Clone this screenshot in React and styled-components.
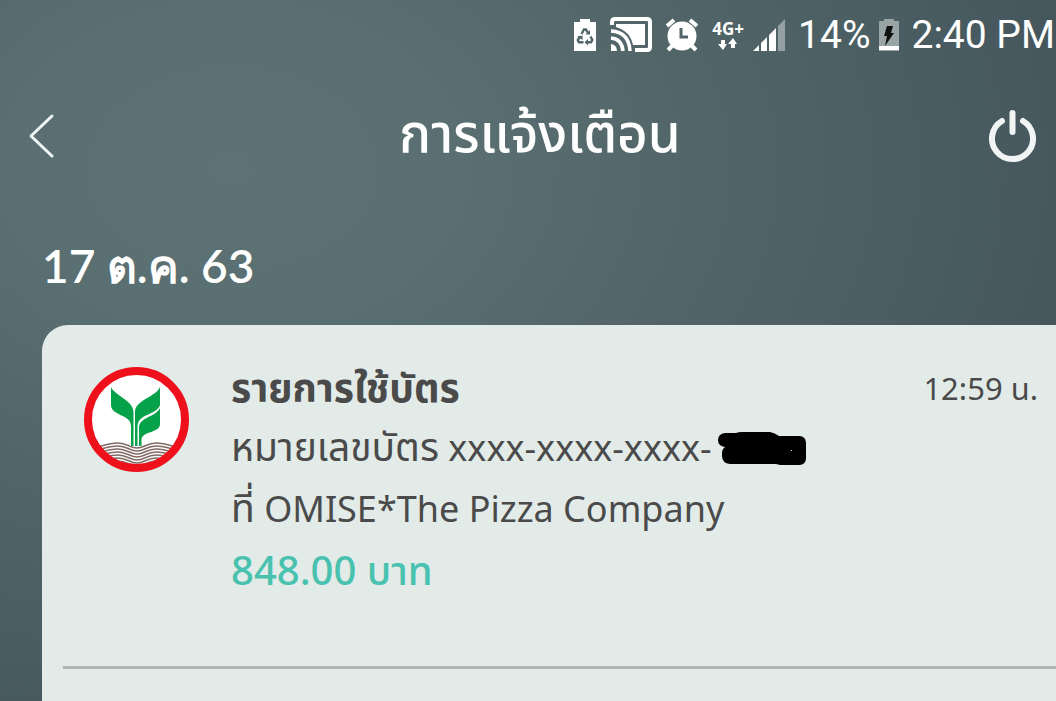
import React from "react";
import styled, { createGlobalStyle } from "styled-components";

const Global = createGlobalStyle`
  *, *::before, *::after { box-sizing: border-box; }
  body { margin: 0; background: #52666a; }
`;

const Screen = styled.div`
  min-height: 100vh;
  display: flex;
  flex-direction: column;
  overflow: hidden;
  font-family: "Noto Sans", "Noto Sans Thai", sans-serif;
  color: #fff;
  background: radial-gradient(ellipse 900px 640px at 22% 24%, #5d7274 0%, #5a6f71 25%, #43555b 100%);
`;

const StatusBar = styled.div`
  height: 70px;
  padding-right: 1px;
  display: flex;
  align-items: center;
  justify-content: flex-end;
  font-family: Roboto, sans-serif;
  font-size: 39px;
  line-height: 48px;
  white-space: nowrap;
`;

const StatusIcons = styled.div`
  display: flex;
  align-items: center;
  gap: 14px;
  margin-right: 13px;
`;

const Network = styled.div`
  display: flex;
  flex-direction: column;
  align-items: center;
  margin-right: -5px;
  font: 700 17px/18px "Open Sans", sans-serif;
`;

const BatteryLevel = styled.svg`
  margin: 0 12px 0 9px;
`;

const Header = styled.header`
  height: 132px;
  padding: 0 20px 0 28px;
  display: grid;
  grid-template-columns: 64px 1fr 48px;
  align-items: center;
`;

const IconButton = styled.button`
  display: flex;
  padding: 0;
  border: 0;
  background: none;
  color: #f1f5f6;
`;

const Title = styled.h1`
  margin: 0;
  padding-bottom: 8px;
  text-align: center;
  font-size: 53px;
  line-height: 80px;
  font-weight: 500;
`;

const DateHeading = styled.h2`
  margin: 32px 0 27px 42px;
  font-family: Lato, "Noto Sans", sans-serif;
  font-size: 46px;
  line-height: 64px;
  font-weight: 600;
`;

const Card = styled.main`
  flex: 1;
  margin-left: 42px;
  border-radius: 26px 0 0 0;
  background: #e2ebe8;
  color: #4a4a4a;
`;

const Notice = styled.article`
  display: grid;
  grid-template-columns: 105px 1fr auto;
  column-gap: 42px;
  height: 344px;
  margin-left: 21px;
  padding: 31px 18px 0 21px;
  border-bottom: 3px solid #b1b3b3;
`;

const Logo = styled.svg`
  margin-top: 11px;
`;

const Details = styled.div`
  font-size: 36px;
  line-height: 61px;
  white-space: nowrap;
`;

const Subject = styled.h3`
  margin: 0;
  font-size: 39px;
  line-height: 61px;
  font-weight: 700;
`;

const Line = styled.p`
  margin: 0;
`;

const Label = styled.span`
  font-size: 39px;
  line-height: 1;
`;

const Redaction = styled.svg`
  margin-left: 6px;
  vertical-align: -4px;
`;

const Amount = styled(Line)`
  font-size: 40px;
  color: #48c1ae;
  font-weight: 500;
`;

const Time = styled.time`
  font-size: 31px;
  line-height: 64px;
`;

function StatusGlyphs() {
  return (
    <StatusIcons>
      <svg width="22" height="34" viewBox="0 0 22 34" aria-hidden="true">
        <path d="M0 4H6V1H16V4H22V33H0Z" fill="#fff" />
        <g fill="none" stroke="#52666a" strokeWidth="2.4">
          <path d="M7.5 16L10 11.5H12L14 15M16.5 18.5L18.3 22L17 24.3H13M9.5 24.3H5L3.8 22L6 18.5" />
        </g>
        <path d="M11.5 16.5H16V12ZM14 21V27.500L10.500 24.300ZM3 18.500L8.500 17.500L8.500 22Z" fill="#52666a" />
      </svg>
      <svg width="42" height="36" viewBox="0 0 42 36" fill="none" aria-hidden="true">
        <path d="M2 8V5Q2 2 5 2H37Q40 2 40 5V30Q40 33 37 33H25" stroke="#fff" strokeWidth="4" />
        <path d="M6 7H35V28H23Q20 14 6 10Z" fill="#fff" />
        <path d="M1 14Q19 15 20 34M1 21Q12 22 13 34" stroke="#fff" strokeWidth="3.5" />
        <path d="M1 27Q7 28 7 34H1Z" fill="#fff" />
      </svg>
      <svg width="32" height="34" viewBox="0 0 32 34" fill="none" stroke="#fff" aria-hidden="true">
        <circle cx="16" cy="18" r="14.500" fill="#fff" stroke="none" />
        <path d="M1 8L8 2M24 2L31 8M6 28L2 32M26 28L30 32" strokeWidth="4" />
        <path d="M15 10V19H22" stroke="#52666a" strokeWidth="3" />
      </svg>
      <Network>
        4G+
        <svg width="20" height="12" viewBox="0 0 20 12" fill="#fff" aria-hidden="true">
          <path d="M3 2H7V6H9L5 12L0 6H3ZM13 10H17V6H19L15 0L10 6H13Z" />
        </svg>
      </Network>
      <svg width="32" height="33" viewBox="0 0 32 33" fill="#fff" aria-hidden="true">
        <path d="M0 32L6 26V32ZM8 24L14 18V32H8ZM16 16L23 9V32H16Z" />
        <path d="M25 7L32 0V32H25Z" opacity=".4" />
      </svg>
    </StatusIcons>
  );
}

const waveOffsets = [0, 3, 6, 9, 12, 15, 18];

function BankLogo() {
  return (
    <Logo width="105" height="105" viewBox="0 0 105 105" role="img" aria-label="KBank">
      <clipPath id="disc">
        <circle cx="52.5" cy="52.5" r="45" />
      </clipPath>
      <circle cx="52.5" cy="52.5" r="48.5" fill="#fff" />
      <g clipPath="url(#disc)" fill="none" stroke="#806a63" strokeWidth="1.500">
        {waveOffsets.map((dy) => (
          <path
            key={dy}
            transform={`translate(0 ${dy})`}
            d="M2 82C12 82 22 76 34 76C43 76 46 81 53 81C60 81 63 76 72 76C84 76 93 82 103 82"
          />
        ))}
      </g>
      <path d="M46 60H58V79H46Z" fill="#fff" />
      <g fill="#06a24a">
        <path d="M27 20C31 29 49 33 49.500 45V79H47V59C47 47 27 49 27 38Z" />
        <path d="M76 20C72 30 51 33 51 45V79H53.500V60C53.500 46 72 49 76 38Z" />
        <path d="M76 41C72 50 55 50 55 61V79H57.500V72C59 64 76 66 76 57Z" />
      </g>
      <circle cx="52.5" cy="52.5" r="48.5" fill="none" stroke="#ee111c" strokeWidth="8" />
    </Logo>
  );
}

function HiddenDigits() {
  return (
    <Redaction width="89" height="33" viewBox="0 0 89 33" role="img" aria-label="Hidden digits">
      <path
        d="M7 1H18Q20 0 24 0H52Q57 1 61 4H82Q88 5 88 11V26Q88 32 82 33H62Q59 32 57 32H12Q4 31 4 24V20Q4 17 7 15Q0 14 0 8Q0 2 7 1Z"
        fill="#000"
      />
      <path d="M73 18H74V19H73Z" fill="#d5dddb" />
    </Redaction>
  );
}

export default function App() {
  return (
    <Screen>
      <Global />
      <StatusBar>
        <StatusGlyphs />
        14%
        <BatteryLevel width="20" height="33" viewBox="0 0 20 33" aria-hidden="true">
          <path d="M0 2H5V0H15V2H20V32H0Z" fill="#98a4a6" />
          <path d="M0 27H20V31H0Z" fill="#fff" />
          <path d="M8 7H14L12 14H15L6 27L8 17H5Z" fill="#111" />
        </BatteryLevel>
        2:40 PM
      </StatusBar>
      <Header>
        <IconButton type="button" aria-label="Back">
          <svg width="28" height="46" viewBox="0 0 28 46" fill="none" stroke="currentColor" strokeWidth="3" strokeLinecap="round" strokeLinejoin="round">
            <path d="M24 3L3 23L24 43" />
          </svg>
        </IconButton>
        <Title>การแจ้งเตือน</Title>
        <IconButton type="button" aria-label="Log out">
          <svg width="48" height="54" viewBox="0 0 48 54" fill="none" stroke="currentColor" strokeWidth="6" strokeLinecap="round">
            <path d="M24.500 4V23M14 12A20.500 20.500 0 1 0 35 12" />
          </svg>
        </IconButton>
      </Header>
      <DateHeading>17 ต.ค. 63</DateHeading>
      <Card>
        <Notice>
          <BankLogo />
          <Details>
            <Subject>รายการใช้บัตร</Subject>
            <Line>
              <Label>หมายเลขบัตร</Label> xxxx-xxxx-xxxx-
              <HiddenDigits />
            </Line>
            <Line>
              <Label>ที่</Label> OMISE*The Pizza Company
            </Line>
            <Amount>848.00 บาท</Amount>
          </Details>
          <Time>12:59 น.</Time>
        </Notice>
      </Card>
    </Screen>
  );
}
